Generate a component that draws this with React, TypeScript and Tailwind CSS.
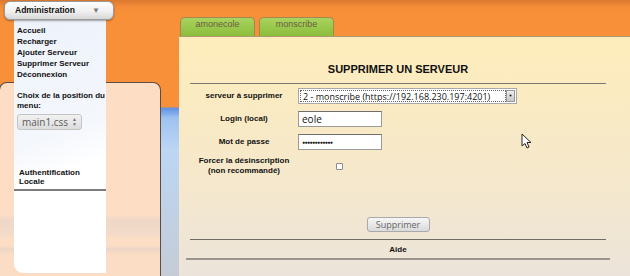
const sans = "font-['Liberation_Sans',Arial,sans-serif]";
const ui = "font-['Open_Sans','DejaVu_Sans',sans-serif]";

const MENU = ['Accueil', 'Recharger', 'Ajouter Serveur', 'Supprimer Serveur', 'Déconnexion'];

function Tab({ label }: { label: string }) {
  return (
    <div className="w-[75px] h-[19px] rounded-t-[5px] border border-b-0 border-[#a4874f] bg-[linear-gradient(to_bottom,#a9d35e,#8bbd3c)] pt-[1px] text-center text-[9px] leading-[11px] text-[#6a5d40]">
      {label}
    </div>
  );
}

function AdminMenu() {
  return (
    <>
      <div className="absolute left-[14px] top-[19px] w-[92px] h-[254px] rounded-bl-[9px] bg-[linear-gradient(160deg,#edf2fb_0%,#f4f7fc_45%,#ffffff_60%,#ffffff_100%)] pt-[6px] text-[8px] leading-[11px] font-bold text-[#111]">
        <ul className="pl-[3px]">
          {MENU.map((item) => (
            <li key={item}>{item}</li>
          ))}
        </ul>
        <p className="mt-[11px] pl-[3px] leading-[9.5px]">
          Choix de la position du
          <br />
          menu:
        </p>
        <div className="ml-[3px] mt-[4px] w-[65px] h-[16px] rounded-[3px] border border-[#c4c4c4] bg-[linear-gradient(to_bottom,#f2f2f2,#dcdcdc)] flex items-center justify-between pl-[4px] pr-[4px]">
          <span className={`${ui} font-normal text-[10px] text-[#5a5a5a]`}>main1.css</span>
          <span className="flex flex-col items-center text-[#777] text-[5px] leading-[5px] font-normal">
            <span>▲</span>
            <span>▼</span>
          </span>
        </div>
        <p className="mt-[38px] pl-[5px] leading-[9px]">
          Authentification
          <br />
          Locale
        </p>
        <div className="mt-[3px] h-[2px] bg-[#7d7d7d]" />
      </div>
      <div className="absolute left-[4px] top-[1px] w-[110px] h-[19px] rounded-[6px] border border-[#9a9a9a] bg-[linear-gradient(to_bottom,#ffffff,#f0f0f0_55%,#d8d8d8)] shadow-[0_1px_2px_rgba(0,0,0,0.35)] flex items-center justify-between pl-[10px] pr-[13px]">
        <span className="text-[8.5px] font-bold text-[#111] leading-none">Administration</span>
        <span className="text-[8px] text-[#7c7c7c] leading-none">▼</span>
      </div>
    </>
  );
}

function Cursor() {
  return (
    <svg className="absolute left-[521px] top-[133px]" width="11" height="16" viewBox="0 0 11 16">
      <path d="M1 1 L1 13 L4 10.5 L6 15 L8 14 L6 9.5 L10 9.5 Z" fill="#fff" stroke="#222" strokeWidth="1" strokeLinejoin="round" />
    </svg>
  );
}

export default function App() {
  return (
    <div
      className={`${sans} relative w-[630px] h-[276px] overflow-hidden flex bg-[linear-gradient(to_bottom,#d9782f_0px,#f28a38_6px,#f8903a_12px,#f8903a_107px,#5d8fe3_108px,#9ec2f0_118px,#bcd6f4_150px,#c5ccd6_276px)]`}
    >
      <aside className="w-[179px] shrink-0 flex flex-col">
        <div className="h-[82px] shrink-0" />
        <div className="flex-1 -ml-px w-[162px] rounded-t-[8px] border border-b-0 border-[#5b4d45] bg-[linear-gradient(to_bottom,#fddec5_0%,#fddec5_68%,#efd8c8_71%,#f3dac8_78%,#fcdec5_81%,#fddec5_84%,#edd6c6_86%,#fbdcc5_89%,#fbdcc4_100%)]" />
      </aside>

      <main className="flex-1 flex flex-col pt-[17px]">
        <div className="flex gap-[4px] pl-px">
          <Tab label="amonecole" />
          <Tab label="monscribe" />
        </div>
        <section className="flex-1 border-t border-[#b59a70] bg-[linear-gradient(to_bottom,#feedbb,#f5e8cc_60%,#ece4da)] pl-[11px] pr-[24px] pt-[26px] text-[#111]">
          <h1 className="text-center text-[11px] leading-[13px] font-bold">SUPPRIMER UN SERVEUR</h1>
          <div className="mt-[7px] h-px bg-[#7b7670]" />

          <div className="mt-[4px] grid grid-cols-[108px_1fr] items-center gap-y-[7px] text-[8px] font-bold">
            <label className="text-center">serveur à supprimer</label>
            <div className="w-[219px] h-[16px] border border-[#a8a8a8] bg-white p-px flex">
              <div className={`${ui} flex-1 border border-dotted border-[#666] text-[9px] leading-[12px] font-normal pl-[2px] whitespace-nowrap overflow-hidden`}>
                2 - monscribe (https://192.168.230.197:4201)
              </div>
              <div className="w-[9px] border border-[#999] bg-[linear-gradient(to_bottom,#eee,#c8c8c8)] flex items-center justify-center text-[4px] text-black">
                ▼
              </div>
            </div>

            <label className="text-center">Login (local)</label>
            <div className={`${ui} w-[84px] h-[16px] border border-[#9a9a9a] border-t-[#6e6e6e] bg-white pl-[3px] text-[10px] leading-[14px] font-normal`}>
              eole
            </div>

            <label className="text-center">Mot de passe</label>
            <div className="w-[84px] h-[16px] border border-[#9a9a9a] border-t-[#6e6e6e] bg-white pl-[3px] text-[5px] leading-[14px] font-normal tracking-[-0.5px]">
              ●●●●●●●●●●●●
            </div>

            <label className="text-center leading-[10px] -mt-[1px]">
              Forcer la désinscription
              <br />
              (non recommandé)
            </label>
            <div className="pl-[38px]">
              <div className="w-[7px] h-[7px] rounded-[1px] border border-[#8a8a8a] bg-white" />
            </div>
          </div>

          <div className="mt-[41px] flex justify-center">
            <button className={`${ui} w-[63px] h-[15px] rounded-[3px] border border-[#a9a9a9] bg-[linear-gradient(to_bottom,#f6f6f6,#dadada)] text-[9px] leading-[12px] text-[#666]`}>
              Supprimer
            </button>
          </div>

          <div className="mt-[7px] h-px bg-[#6f6b66]" />
          <p className="mt-[5px] text-center text-[8px] leading-[10px] font-bold">Aide</p>
          <div className="mt-[3px] -mx-[4px] h-[2px] bg-[#9b968d]" />
        </section>
      </main>

      <AdminMenu />
      <Cursor />
    </div>
  );
}
